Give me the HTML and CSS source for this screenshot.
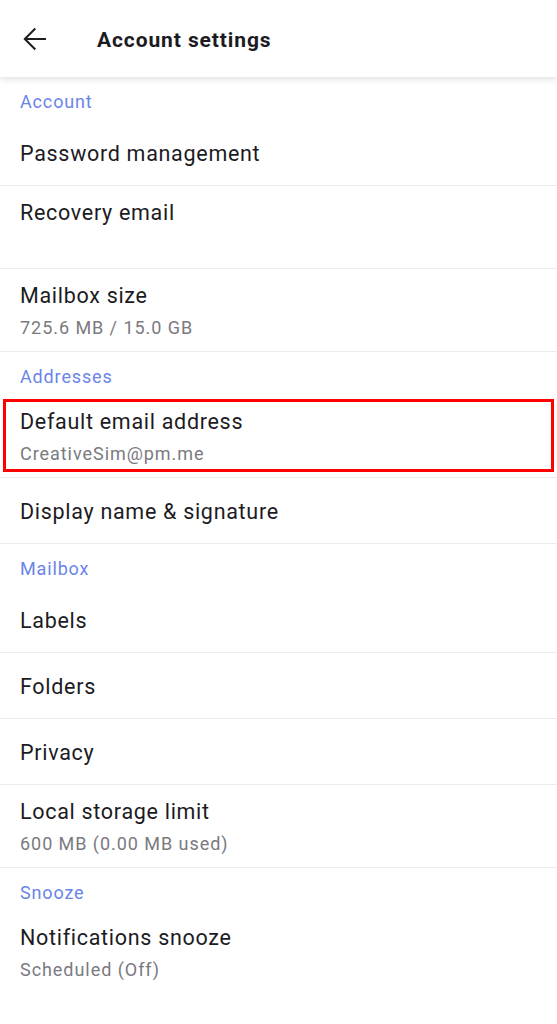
FILE: index.html
```html
<!DOCTYPE html>
<html lang="en">
<head>
<meta charset="utf-8">
<title>Account settings</title>
<link rel="stylesheet" href="styles.css">
</head>
<body>
<header class="topbar">
  <svg class="back" width="24" height="24" viewBox="0 0 24 24" aria-hidden="true">
    <path d="M23 12H1.8M12.3 1.5L1.8 12l10.5 10.5" fill="none" stroke="#1f1f1f" stroke-width="2"/>
  </svg>
  <h1 class="title">Account settings</h1>
</header>
<main class="list">
  <div class="section">Account</div>
  <div class="row single"><span class="row-title">Password management</span></div>
  <div class="row double"><span class="row-title">Recovery email</span><span class="row-sub"></span></div>
  <div class="row double"><span class="row-title">Mailbox size</span><span class="row-sub">725.6 MB / 15.0 GB</span></div>

  <div class="section">Addresses</div>
  <div class="row double highlighted"><span class="row-title">Default email address</span><span class="row-sub">CreativeSim@pm.me</span></div>
  <div class="row single"><span class="row-title">Display name &amp; signature</span></div>

  <div class="section">Mailbox</div>
  <div class="row single"><span class="row-title">Labels</span></div>
  <div class="row single"><span class="row-title">Folders</span></div>
  <div class="row single"><span class="row-title">Privacy</span></div>
  <div class="row double"><span class="row-title">Local storage limit</span><span class="row-sub">600 MB (0.00 MB used)</span></div>

  <div class="section">Snooze</div>
  <div class="row double last"><span class="row-title">Notifications snooze</span><span class="row-sub">Scheduled (Off)</span></div>
</main>
</body>
</html>
```

FILE: styles.css
```css
html, body {
  margin: 0;
  padding: 0;
  background: #ffffff;
}
body {
  font-family: Roboto, "Noto Sans", "Liberation Sans", sans-serif;
  color: #1c1b1f;
  width: 557px;
}
.topbar {
  position: relative;
  z-index: 1;
  height: 77px;
  display: flex;
  align-items: center;
  padding-left: 23px;
  background: #fff;
  box-shadow: 0 2px 7px rgba(0, 0, 0, 0.13);
}
.back {
  display: block;
  flex: none;
  margin-top: 0;
}
.title {
  margin: 3px 0 0 50px;
  font-size: 21px;
  font-weight: 700;
  letter-spacing: 0.9px;
  color: #1c1b1f;
  line-height: 24px;
}
.list {
  display: flex;
  flex-direction: column;
}
.section {
  height: 43px;
  box-sizing: border-box;
  padding: 13px 20px 0;
  font-size: 18px;
  line-height: 24px;
  letter-spacing: 0.85px;
  color: #6b84e8;
}
.row {
  position: relative;
  display: flex;
  flex-direction: column;
  box-sizing: border-box;
  padding: 0 20px;
  border-bottom: 1px solid #ececec;
}
.row.single {
  height: 66px;
  justify-content: center;
  padding-top: 2px;
}
.row.double {
  height: 83px;
  padding-top: 15px;
}
.row.last {
  border-bottom: none;
}
.row-title {
  font-size: 21.5px;
  line-height: 24px;
  letter-spacing: 0.7px;
  color: #1c1b1f;
}
.row-sub {
  margin-top: 8px;
  min-height: 24px;
  font-size: 18px;
  line-height: 24px;
  letter-spacing: 0.95px;
  color: #7a7a80;
}
.highlighted::after {
  content: "";
  position: absolute;
  left: 3px;
  right: 3px;
  top: 4px;
  bottom: 5px;
  border: 3px solid #ff0000;
}
```
